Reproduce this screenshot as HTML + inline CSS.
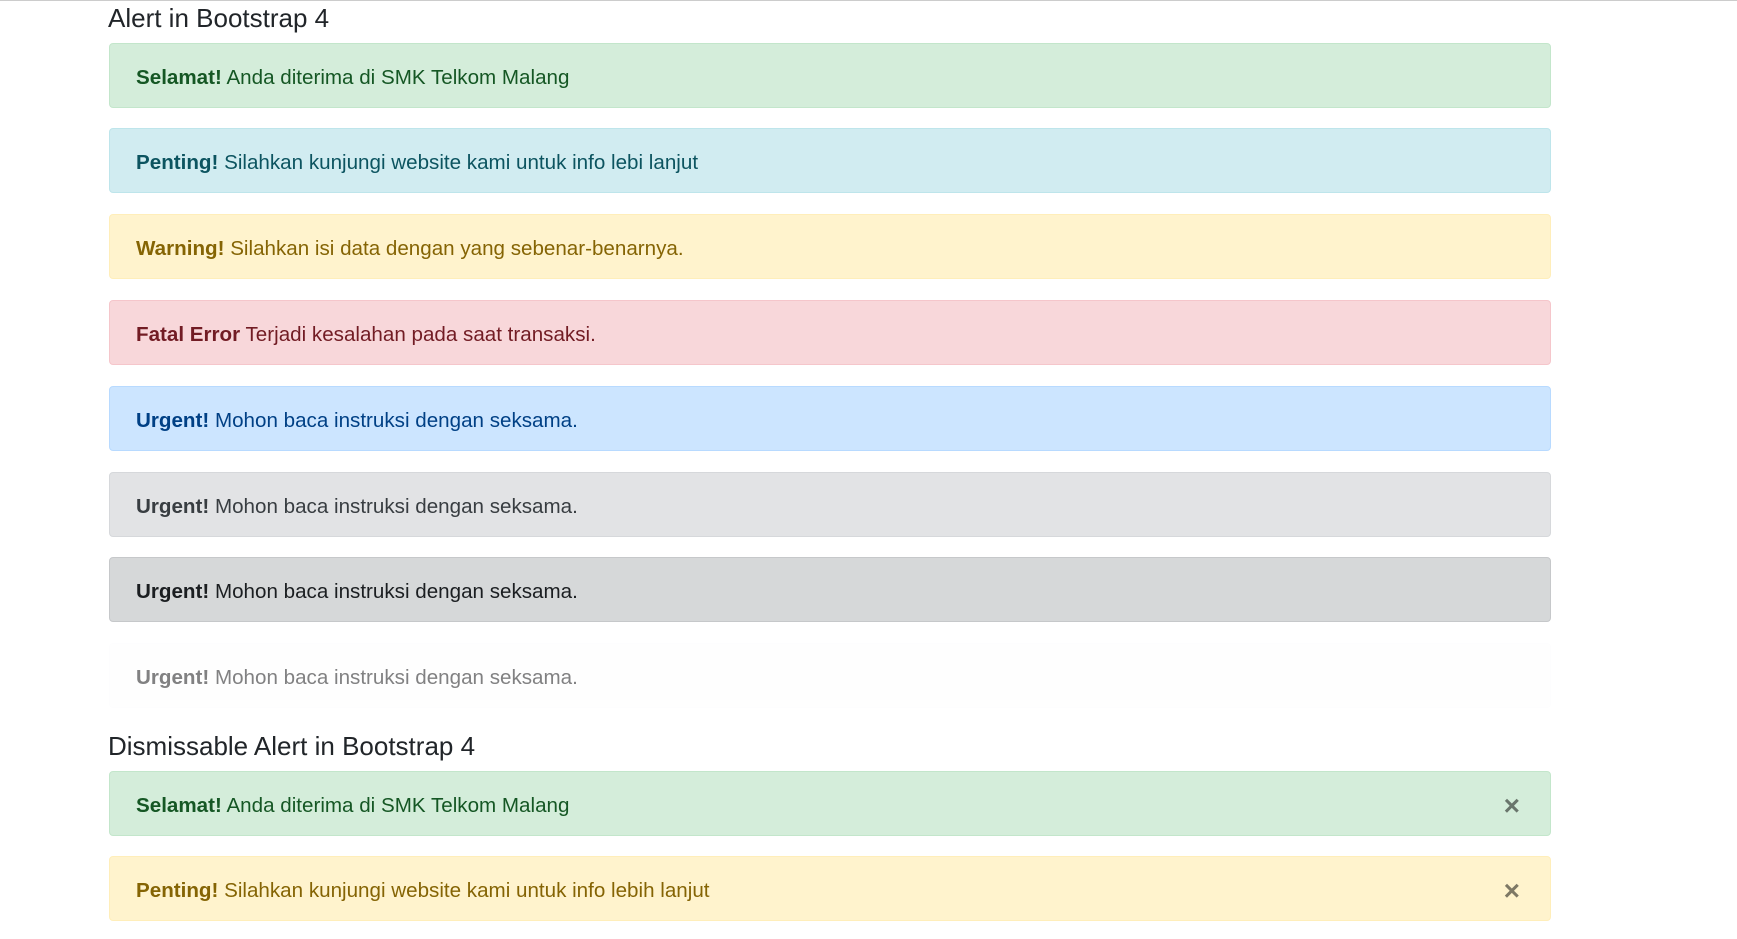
<!DOCTYPE html>
<html><head><meta charset="utf-8"><style>
body{margin:0;background:#fff;font-family:"Liberation Sans",sans-serif;border-top:1px solid #ccc;}
h4{position:absolute;left:108px;margin:0;font-weight:400;font-size:26px;color:#212529;}
.a{position:absolute;left:109px;width:1442px;height:65px;border:1px solid;border-radius:4px;font-size:20.6px;line-height:67px;padding-left:26px;box-sizing:border-box;}
.a b{font-weight:700}
.x{position:absolute;right:30px;top:0;font-size:28px;font-weight:700;color:#000;opacity:.5}
.s{background:#d4edda;border-color:#c3e6cb;color:#155724}
.i{background:#d1ecf1;border-color:#bee5eb;color:#0c5460}
.w{background:#fff3cd;border-color:#ffeeba;color:#856404}
.d{background:#f8d7da;border-color:#f5c6cb;color:#721c24}
.p{background:#cce5ff;border-color:#b8daff;color:#004085}
.se{background:#e2e3e5;border-color:#d6d8db;color:#383d41}
.dk{background:#d6d8d9;border-color:#c6c8ca;color:#1b1e21}
.l{background:#fefefe;border-color:#fdfdfe;color:#818182}
</style></head><body>
<h4 style="top:3px">Alert in Bootstrap 4</h4>
<div class="a s" style="top:43px"><b>Selamat!</b> Anda diterima di SMK Telkom Malang</div>
<div class="a i" style="top:128px"><b>Penting!</b> Silahkan kunjungi website kami untuk info lebi lanjut</div>
<div class="a w" style="top:214px"><b>Warning!</b> Silahkan isi data dengan yang sebenar-benarnya.</div>
<div class="a d" style="top:300px"><b>Fatal Error</b> Terjadi kesalahan pada saat transaksi.</div>
<div class="a p" style="top:386px"><b>Urgent!</b> Mohon baca instruksi dengan seksama.</div>
<div class="a se" style="top:472px"><b>Urgent!</b> Mohon baca instruksi dengan seksama.</div>
<div class="a dk" style="top:557px"><b>Urgent!</b> Mohon baca instruksi dengan seksama.</div>
<div class="a l" style="top:643px"><b>Urgent!</b> Mohon baca instruksi dengan seksama.</div>
<h4 style="top:731px">Dismissable Alert in Bootstrap 4</h4>
<div class="a s" style="top:771px"><b>Selamat!</b> Anda diterima di SMK Telkom Malang<span class="x">×</span></div>
<div class="a w" style="top:856px"><b>Penting!</b> Silahkan kunjungi website kami untuk info lebih lanjut<span class="x">×</span></div>
</body></html>
